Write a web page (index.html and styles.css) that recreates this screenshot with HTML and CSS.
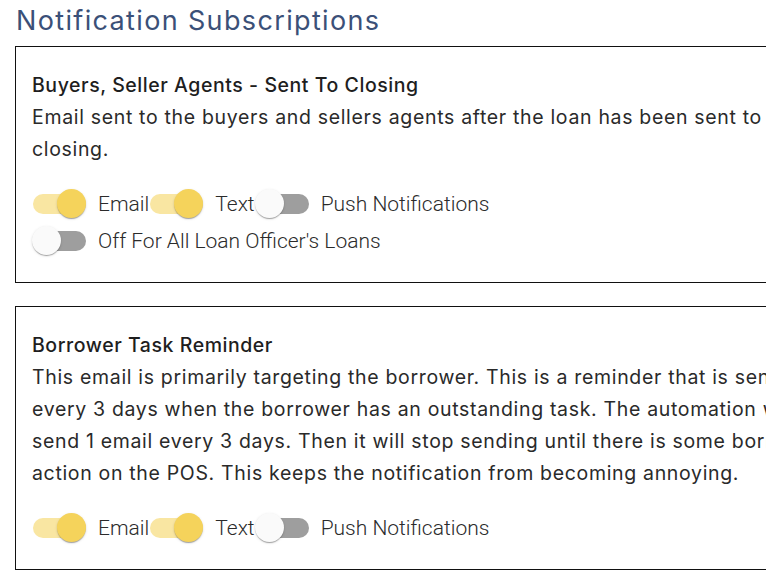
FILE: index.html
```html
<!DOCTYPE html>
<html lang="en">
<head>
    <meta charset="UTF-8">
    <meta name="viewport" content="width=device-width, initial-scale=1.0">
    <title>Notification Subscriptions</title>
    <link rel="stylesheet" href="styles.css">
</head>
<body>

<h1 class="page-title">Notification Subscriptions</h1>

<!-- Buyers / seller agents -->
<div class="card">
    <div class="card-title">Buyers, Seller Agents - Sent To Closing</div>
    <p class="card-text">Email sent to the buyers and sellers agents after the loan has been sent to closing.</p>

    <div class="toggles">
        <div class="toggle-row">
            <label class="toggle">
                <span class="switch on"><span class="track"></span><span class="thumb"></span></span>
                <span class="toggle-label">Email</span>
            </label>
            <label class="toggle">
                <span class="switch on"><span class="track"></span><span class="thumb"></span></span>
                <span class="toggle-label">Text</span>
            </label>
            <label class="toggle">
                <span class="switch"><span class="track"></span><span class="thumb"></span></span>
                <span class="toggle-label">Push Notifications</span>
            </label>
        </div>
        <div class="toggle-row">
            <label class="toggle">
                <span class="switch"><span class="track"></span><span class="thumb"></span></span>
                <span class="toggle-label">Off For All Loan Officer's Loans</span>
            </label>
        </div>
    </div>
</div>

<!-- Borrower reminder -->
<div class="card">
    <div class="card-title">Borrower Task Reminder</div>
    <p class="card-text">This email is primarily targeting the borrower. This is a reminder that is sent every 3 days when the borrower has an outstanding task. The automation will send 1 email every 3 days. Then it will stop sending until there is some borrower action on the POS. This keeps the notification from becoming annoying.</p>

    <div class="toggles">
        <div class="toggle-row">
            <label class="toggle">
                <span class="switch on"><span class="track"></span><span class="thumb"></span></span>
                <span class="toggle-label">Email</span>
            </label>
            <label class="toggle">
                <span class="switch on"><span class="track"></span><span class="thumb"></span></span>
                <span class="toggle-label">Text</span>
            </label>
            <label class="toggle">
                <span class="switch"><span class="track"></span><span class="thumb"></span></span>
                <span class="toggle-label">Push Notifications</span>
            </label>
        </div>
    </div>
</div>

</body>
</html>
```

FILE: styles.css
```css
body {
    margin: 0;
    padding: 0 0 0 15px;
    background-color: #fff;
    color: #222;
    font-family: Inter, "Noto Sans", sans-serif;
    overflow: hidden;
}

.page-title {
    margin: 3px 0 7px 1px;
    font-size: 27px;
    font-weight: 400;
    line-height: 36px;
    letter-spacing: 1.35px;
    color: #3b5078;
}

/* cards */
.card {
    width: 795px;
    padding: 22px 16px 23px;
    border: 1.5px solid #111;
    margin-bottom: 23px;
}

.card-title {
    font-size: 19.5px;
    font-weight: 500;
    line-height: 32px;
    letter-spacing: 0.55px;
    color: #1e1e1e;
}

.card-text {
    margin: 0;
    font-size: 19.5px;
    line-height: 32px;
    letter-spacing: 0.67px;
    color: #2a2a2a;
}

/* switches */
.toggles {
    margin-top: 20px;
}

.toggle-row {
    display: flex;
    align-items: center;
    height: 37px;
}

.toggle {
    display: flex;
    align-items: center;
    cursor: pointer;
}

.toggle-label {
    margin-left: 12px;
    font-family: Roboto, sans-serif;
    font-weight: 300;
    font-size: 21px;
    color: #2b2b2b;
}

.switch {
    position: relative;
    width: 54px;
    height: 29px;
    flex-shrink: 0;
}

.switch .track {
    position: absolute;
    left: 1px;
    right: 0;
    top: 4.5px;
    height: 20px;
    border-radius: 10px;
    background-color: #9e9e9e;
}

.switch .thumb {
    position: absolute;
    top: 0;
    left: 0;
    width: 29px;
    height: 29px;
    border-radius: 50%;
    background-color: #fafafa;
    box-shadow: 0 2px 1px -1px rgba(0, 0, 0, 0.2), 0 1px 1px 0 rgba(0, 0, 0, 0.14), 0 1px 3px 0 rgba(0, 0, 0, 0.12);
}

.switch.on .track {
    background-color: #f9e6a2;
}

.switch.on .thumb {
    left: 25px;
    background-color: #f5d35b;
}
```
